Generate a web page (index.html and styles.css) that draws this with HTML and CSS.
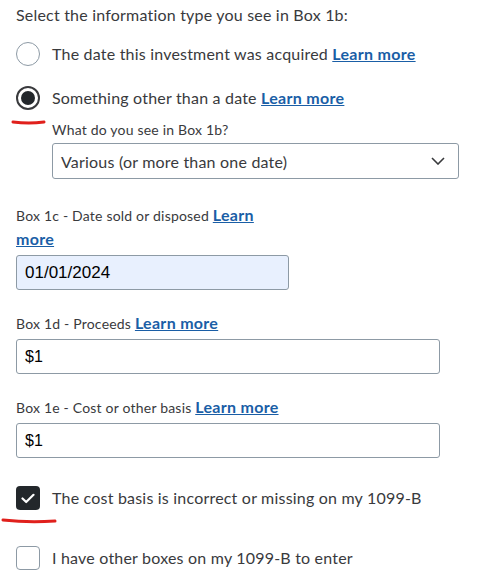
FILE: index.html
```html
<!DOCTYPE html>
<html lang="en">
<head>
  <meta charset="UTF-8">
  <meta name="viewport" content="width=device-width, initial-scale=1.0">
  <title>Box 1b</title>
  <link rel="stylesheet" href="styles.css">
</head>
<body>
  <div class="form">
    <div class="question">Select the information type you see in Box 1b:</div>

    <div class="choices">
      <label class="choice">
        <span class="radio"></span>
        <span>The date this investment was acquired <a href="#">Learn more</a></span>
      </label>
      <label class="choice">
        <span class="radio checked"></span>
        <span>Something other than a date <a href="#">Learn more</a></span>
        <svg class="mark mark-radio" width="36" height="8" viewBox="0 0 36 8"><path d="M2 4 Q18 6 33 4" stroke="#e0201c" stroke-width="3" fill="none" stroke-linecap="round"/></svg>
      </label>
    </div>

    <div class="sub">
      <div class="sub-label">What do you see in Box 1b?</div>
      <div class="select">
        <span>Various (or more than one date)</span>
        <svg width="14" height="8" viewBox="0 0 14 8"><path d="M1 1 L7 7 L13 1" stroke="#393a3d" stroke-width="1.6" fill="none"/></svg>
      </div>
    </div>

    <div class="field field-date">
      <div class="field-label">Box 1c - Date sold or disposed <a href="#">Learn more</a></div>
      <div class="input autofill">01/01/2024</div>
    </div>

    <div class="field">
      <div class="field-label">Box 1d - Proceeds <a href="#">Learn more</a></div>
      <div class="input">$1</div>
    </div>

    <div class="field">
      <div class="field-label">Box 1e - Cost or other basis <a href="#">Learn more</a></div>
      <div class="input">$1</div>
    </div>

    <label class="choice check-row">
      <span class="box checked">
        <svg width="14" height="11" viewBox="0 0 14 11"><path d="M1.5 5.5 L5.2 9 L12.5 1.8" stroke="#fff" stroke-width="2.2" fill="none" stroke-linecap="round" stroke-linejoin="round"/></svg>
      </span>
      <span>The cost basis is incorrect or missing on my 1099-B</span>
      <svg class="mark mark-box" width="56" height="8" viewBox="0 0 56 8"><path d="M2 3 Q28 6 54 4" stroke="#e0201c" stroke-width="3" fill="none" stroke-linecap="round"/></svg>
    </label>

    <label class="choice check-row last">
      <span class="box"></span>
      <span>I have other boxes on my 1099-B to enter</span>
    </label>
  </div>
</body>
</html>
```

FILE: styles.css
```css
body {
  margin: 0;
  font-family: 'Lato', sans-serif;
  color: #393a3d;
  background: #fff;
  letter-spacing: 0.2px;
}
a {
  color: #1a5ea6;
  font-size: 16px;
  font-weight: 700;
  letter-spacing: 0.3px;
  text-decoration: underline;
}
.form {
  display: flex;
  flex-direction: column;
  padding: 3px 16px 0;
}
.question {
  font-size: 16px;
  line-height: 24px;
}
.choices {
  display: flex;
  flex-direction: column;
  gap: 20px;
  margin-top: 15px;
}
.choice {
  position: relative;
  display: flex;
  align-items: center;
  gap: 12px;
  font-size: 16px;
  line-height: 24px;
}
.radio {
  box-sizing: border-box;
  width: 24px;
  height: 24px;
  flex: none;
  border: 1px solid #8d9aa5;
  border-radius: 50%;
}
.radio.checked {
  border: 2px solid #393a3d;
  display: flex;
  align-items: center;
  justify-content: center;
}
.radio.checked::after {
  content: '';
  width: 14px;
  height: 14px;
  border-radius: 50%;
  background: #23272b;
}
.mark {
  position: absolute;
}
.mark-radio {
  left: -5px;
  top: 32px;
}
.mark-box {
  left: -15px;
  top: 31px;
}
.sub {
  margin: 10px 0 0 36px;
}
.sub-label {
  font-size: 14px;
  line-height: 20px;
}
.select {
  box-sizing: border-box;
  height: 36px;
  margin-top: 3px;
  width: 407px;
  border: 1px solid #8d9aa5;
  border-radius: 3px;
  display: flex;
  align-items: center;
  justify-content: space-between;
  padding: 0 13px 0 8px;
  font-size: 16px;
}
.field {
  margin-top: 22px;
}
.field-date {
  margin-top: 25px;
  width: 273px;
}
.field-label {
  font-size: 14px;
  line-height: 24px;
}
.field-label a {
  line-height: 16px;
}
.input {
  box-sizing: border-box;
  height: 35px;
  width: 424px;
  margin-top: 3px;
  border: 1px solid #8d9aa5;
  border-radius: 3px;
  display: flex;
  align-items: center;
  padding: 0 8px;
  font-family: 'Liberation Sans', sans-serif;
  font-size: 16px;
  letter-spacing: 0;
  color: #000;
}
.autofill {
  width: 273px;
  margin-top: 3px;
  font-size: 17px;
  background: #e8f0fe;
}
.check-row {
  margin-top: 28px;
}
.check-row.last {
  margin-top: 36px;
}
.box {
  box-sizing: border-box;
  width: 24px;
  height: 24px;
  flex: none;
  border: 1px solid #8d9aa5;
  border-radius: 4px;
  display: flex;
  align-items: center;
  justify-content: center;
}
.box.checked {
  border: none;
  background: #23272b;
}
```
